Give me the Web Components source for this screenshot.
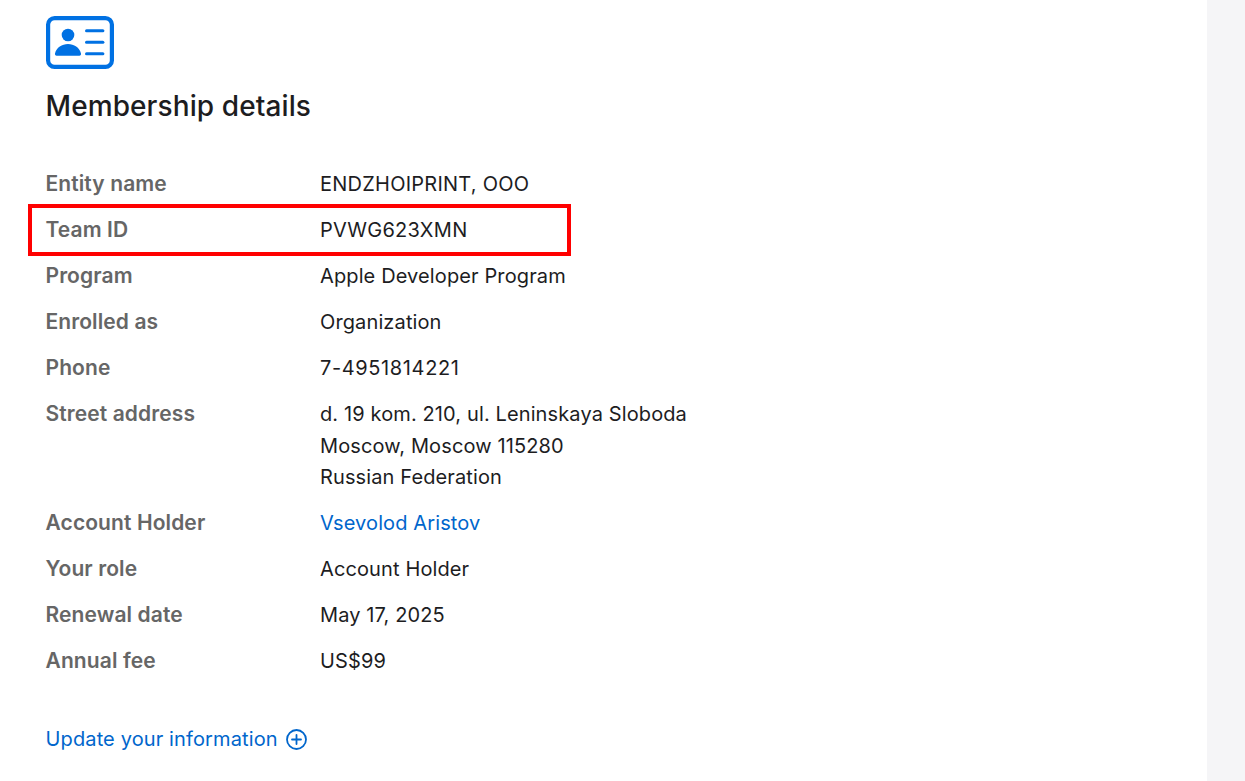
<!DOCTYPE html>
<html><head><meta charset="utf-8"><style>
html,body{margin:0;height:100%;overflow:hidden;background:#fff}
body{font-family:Inter,"Liberation Sans",sans-serif;color:#1d1d1f}
</style></head><body>
<member-page>
<card-icon></card-icon>
<h-title>Membership details</h-title>
<detail-row label="Entity name"><span style="letter-spacing:.24px">ENDZHOIPRINT, OOO</span></detail-row>
<detail-row label="Team ID" marked><span style="letter-spacing:.3px">PVWG623XMN</span></detail-row>
<detail-row label="Program">Apple Developer Program</detail-row>
<detail-row label="Enrolled as">Organization</detail-row>
<detail-row label="Phone"><span style="letter-spacing:.62px">7-4951814221</span></detail-row>
<detail-row label="Street address">d. 19 kom. 210, ul. Leninskaya Sloboda<br>Moscow, Moscow 115280<br>Russian Federation</detail-row>
<detail-row label="Account Holder" link>Vsevolod Aristov</detail-row>
<detail-row label="Your role">Account Holder</detail-row>
<detail-row label="Renewal date">May 17, 2025</detail-row>
<detail-row label="Annual fee">US$99</detail-row>
<update-link>Update your information</update-link>
</member-page>
<script>
function def(name,html){customElements.define(name,class extends HTMLElement{constructor(){super();this.attachShadow({mode:'open'}).innerHTML=html;}});}
def('member-page',`<style>:host{display:flex;width:1245px;height:781px;overflow:hidden}
main{width:1207px;box-sizing:border-box;padding:16px 0 0 46px;display:flex;flex-direction:column}
aside{flex:1;background:#f5f5f7}</style><main><slot></slot></main><aside></aside>`);
def('card-icon',`<style>:host{display:block;width:68px;height:53px}svg{display:block}</style>
<svg width="68" height="53" viewBox="0 0 68 53" fill="#0071e3"><rect x="2.100" y="2.100" width="63.800" height="48.800" rx="6.500" fill="none" stroke="#0071e3" stroke-width="4.200"/>
<circle cx="22" cy="19" r="6.300"/><path d="M9 37.500c1.500-6 7-9.500 13-9.500s11.500 3.500 13 9.500c.3 1.200-.4 2.200-1.600 2.200H10.600c-1.200 0-1.900-1-1.600-2.200z"/>
<rect x="39" y="13.200" width="19.400" height="3" rx="1.500"/><rect x="39" y="24.800" width="19.400" height="3" rx="1.500"/><rect x="39" y="36.200" width="19.400" height="3" rx="1.500"/></svg>`);
def('h-title',`<style>:host{display:block;font-size:28px;font-weight:550;line-height:36px;margin:19px 0 45px -.5px;color:#1d1d1f;letter-spacing:.1px}</style><slot></slot>`);
customElements.define('detail-row',class extends HTMLElement{constructor(){super();
const s=this.attachShadow({mode:'open'});const l=this.getAttribute('label');
s.innerHTML=`<style>:host{display:grid;grid-template-columns:274px 1fr;font-size:20px;line-height:31.5px;margin-bottom:14.5px;position:relative}
.l{font-weight:600;font-size:21px;color:#666;margin:-1px 0 0 -.5px;letter-spacing:.1px}.v{color:#1d1d1f;letter-spacing:.12px}:host([link]) .v{color:#0066cc}
.mark{position:absolute;left:-18px;top:-11px;width:543px;height:52px;box-sizing:border-box;border:4px solid #ff0000;display:none}
:host([marked]) .mark{display:block}</style><div class="l">${l}</div><div class="v"><slot></slot></div><div class="mark"></div>`;}});
def('update-link',`<style>:host{display:flex;align-items:center;gap:8px;font-size:20px;line-height:31px;color:#0066cc;margin:32px 0 0 -.5px;letter-spacing:.13px}svg{display:block}</style><slot></slot>
<svg width="21" height="21" viewBox="0 0 21 21" fill="none" stroke="#0066cc" stroke-width="1.800" stroke-linecap="round"><circle cx="10.500" cy="10.500" r="9.500"/><path d="M10.500 6v9M6 10.500h9"/></svg>`);
</script></body></html>
